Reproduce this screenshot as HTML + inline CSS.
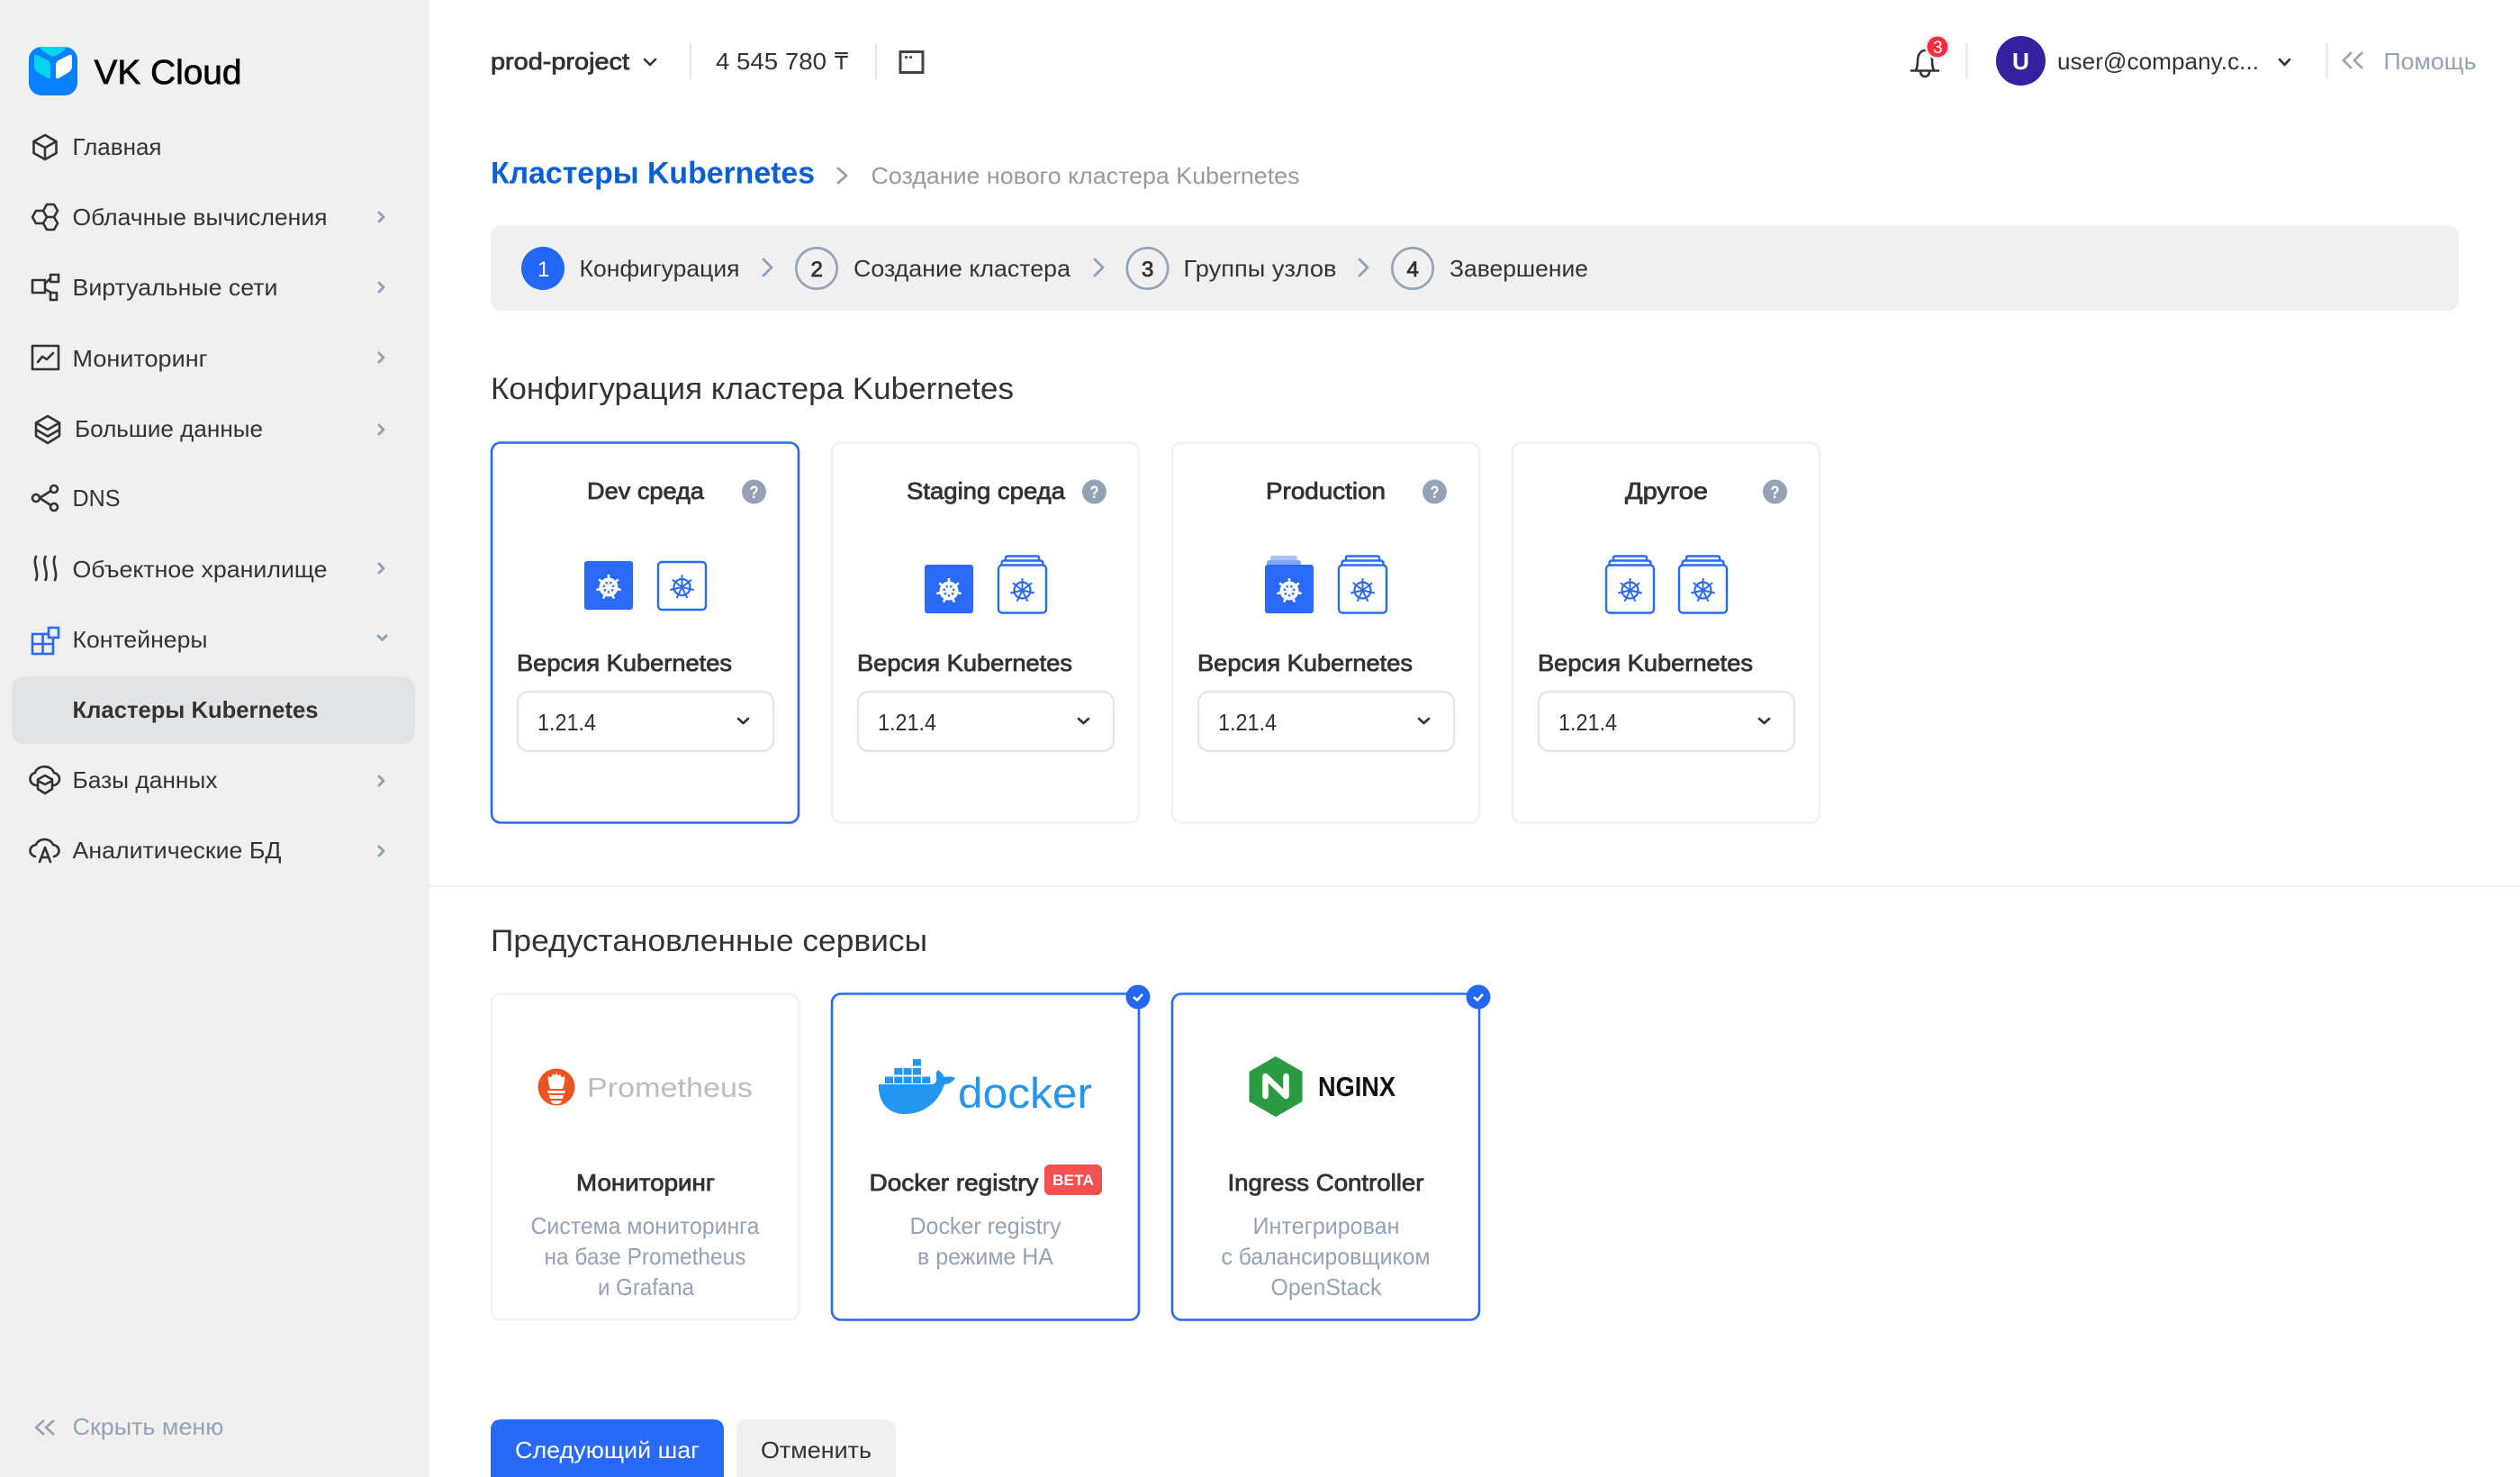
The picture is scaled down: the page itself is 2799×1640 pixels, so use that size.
<!DOCTYPE html>
<html lang="ru"><head><meta charset="utf-8"><title>VK Cloud</title>
<style>
html,body{margin:0;padding:0;width:2799px;height:1640px;overflow:hidden;background:#fff}
svg{display:block}
text{font-family:"Liberation Sans","DejaVu Sans",sans-serif;font-size:26px;fill:#333;}
.m{stroke:#333;stroke-width:.8px}
.b{font-weight:700}
.g{fill:#94a2b5}
.i{fill:none;stroke:#333;stroke-width:2.6;stroke-linejoin:round;stroke-linecap:round}
.c{fill:none;stroke:#8f9fb5;stroke-width:2.8;stroke-linecap:round;stroke-linejoin:round}
.d{fill:none;stroke:#333;stroke-width:2.6;stroke-linecap:round;stroke-linejoin:round}
</style></head><body>
<svg width="2799" height="1640" viewBox="0 0 2799 1640" xmlns="http://www.w3.org/2000/svg">
<defs>
<g id="helm">
<circle r="9" fill="none" stroke="currentColor" stroke-width="2.2"/>
<path d="M0 0L0-13.5M0 0L10.6-8.4M0 0L13.2 3M0 0L5.9 12.2M0 0L-5.9 12.2M0 0L-13.2 3M0 0L-10.6-8.4" fill="none" stroke="currentColor" stroke-width="2"/>
</g>
<g id="helmw">
<circle r="8.5" fill="none" stroke="#fff" stroke-width="4"/>
<circle r="3" fill="#fff"/>
<path d="M0 0L0-14M0 0L10.8-8.6M0 0L13.6 3M0 0L6 12.6M0 0L-6 12.6M0 0L-13.6 3M0 0L-10.8-8.6" fill="none" stroke="#fff" stroke-width="2.6"/>
</g>
<g id="srv" fill="none" stroke="#2a6af6" stroke-width="2.4" stroke-linejoin="round">
<rect x="0" y="0" width="53" height="53" rx="4" fill="#fff"/>
<path d="M3.5 0V-2Q3.5-5 7-5H46Q49.5-5 49.5-2V0"/>
<path d="M8-5V-8Q8-10 10-10H43Q45-10 45-8V-5"/>
</g>
<g id="sel">
<rect x="0" y="0" width="284" height="66" rx="12" fill="#fff" stroke="#e4e5e9" stroke-width="2.4"/>
<text x="22" y="43" textLength="65" lengthAdjust="spacingAndGlyphs">1.21.4</text>
<path d="M245 30L250.500 35L256 30" class="d"/>
</g>
<g id="q">
<circle r="13.5" fill="#94a2b5"/>
<text x="-5" y="7" style="font-size:19px;fill:#fff" class="b" textLength="10" lengthAdjust="spacingAndGlyphs">?</text>
</g>
</defs>

<!-- sidebar -->
<rect x="0" y="0" width="477" height="1640" fill="#f0f0f1"/>
<rect x="32" y="52" width="54" height="54" rx="14" fill="#0b80ff"/>
<path d="M44 52H74C72 56 66 60 59 63C52 60 46 56 44 52Z" fill="#02d6ef"/>
<path d="M38 63Q38 60 41 61L53 67Q56 69 56 72V85Q56 88 53 87L43 81Q38 78 38 74Z" fill="#02d6ef"/>
<path d="M80 63Q80 60 77 61L65 67Q62 69 62 72V85Q62 88 65 87L75 81Q80 78 80 74Z" fill="#fff"/>
<text x="104.500" y="93" style="font-size:38px;fill:#000;stroke:#000;stroke-width:.7px" textLength="164" lengthAdjust="spacingAndGlyphs">VK Cloud</text>

<path class="i" d="M50 150L62.5 157V170L50 177L37.5 170V157ZM37.5 157L50 164L62.5 157M50 164V177"/>
<text x="80.500" y="172" textLength="99" lengthAdjust="spacingAndGlyphs">Главная</text>

<path class="i" d="M36 241L40 234H48L52 241L48 248H40ZM48 234L52 227H60L64 234L60 241H52ZM48 248L52 241H60L64 248L60 255H52Z"/>
<text x="80.500" y="250" textLength="283" lengthAdjust="spacingAndGlyphs">Облачные вычисления</text>
<path class="c" d="M421 236L426 241L421 246"/>

<path class="i" d="M36 311H50V325H36ZM56 305H65V313H56ZM56 325H63V333H56ZM50 315L56 309M50 321L57 325" stroke-linecap="butt"/>
<text x="80.500" y="328" textLength="228" lengthAdjust="spacingAndGlyphs">Виртуальные сети</text>
<path class="c" d="M421 314L426 319L421 324"/>

<path class="i" d="M36 384H65V410H36ZM42 402L47 396L52 399L59 392"/>
<text x="80.500" y="407" textLength="150" lengthAdjust="spacingAndGlyphs">Мониторинг</text>
<path class="c" d="M421 392L426 397L421 402"/>

<path class="i" d="M53 462L66 469.5L53 477L40 469.5ZM40 469.5V484L53 492L66 484V469.5M40 477L53 484.5L66 477"/>
<text x="83" y="485" textLength="209" lengthAdjust="spacingAndGlyphs">Большие данные</text>
<path class="c" d="M421 472L426 477L421 482"/>

<g class="i"><circle cx="40" cy="553" r="4"/><circle cx="60" cy="543" r="4"/><circle cx="60" cy="563" r="4"/><path d="M44 553L56.5 545M44 553L56.5 561"/></g>
<text x="80.500" y="562" textLength="53" lengthAdjust="spacingAndGlyphs">DNS</text>

<path class="i" d="M40 618C36 626 44 636 40 644M50.5 618C46.5 626 54.5 636 50.5 644M61 618C57 626 65 636 61 644"/>
<text x="80.500" y="641" textLength="283" lengthAdjust="spacingAndGlyphs">Объектное хранилище</text>
<path class="c" d="M421 626L426 631L421 636"/>

<g fill="none" stroke="#2a6af6" stroke-width="2.6"><rect x="36" y="704" width="23" height="22"/><path d="M36 715H59M47.5 704V726"/><rect x="54" y="697" width="11" height="11" fill="#f0f0f1"/></g>
<text x="80.500" y="719" textLength="150" lengthAdjust="spacingAndGlyphs">Контейнеры</text>
<path class="c" d="M420 706L424.5 710.500L429 706"/>

<rect x="13" y="751" width="448" height="75" rx="14" fill="#e2e3e5"/>
<text x="80.500" y="797" class="b" textLength="273" lengthAdjust="spacingAndGlyphs">Кластеры Kubernetes</text>

<path class="i" d="M40 872C32 871 31 860 39 858C41 850 56 848 60 858C68 860 68 870 60 872M50 861L58 865.5V876L50 881L42 876V865.5ZM42 867L50 871L58 867"/>
<text x="80.500" y="875" textLength="161" lengthAdjust="spacingAndGlyphs">Базы данных</text>
<path class="c" d="M421 862L426 867L421 872"/>

<path class="i" d="M39 951C31 949 32 939 40 938C43 930 56 930 59 938C67 939 68 949 60 951M44 957L50 941L56 957M46 952H54"/>
<text x="80.500" y="953" textLength="232" lengthAdjust="spacingAndGlyphs">Аналитические БД</text>
<path class="c" d="M421 940L426 945L421 950"/>

<path d="M49 1577L40 1585L49 1593M60 1577L51 1585L60 1593" fill="none" stroke="#94a2b5" stroke-width="2.6"/>
<text x="80.500" y="1593" class="g" textLength="168" lengthAdjust="spacingAndGlyphs">Скрыть меню</text>

<!-- header -->
<text x="545" y="77" class="m" textLength="154" lengthAdjust="spacingAndGlyphs">prod-project</text>
<path class="d" d="M716 66L722 72L728 66"/>
<path d="M767 48V88M973 48V88M2184.5 48V88M2584.5 48V88" stroke="#e4e7ef" stroke-width="2.2"/>
<text x="795" y="77" textLength="123" lengthAdjust="spacingAndGlyphs">4 545 780</text>
<text x="927" y="77" textLength="15" lengthAdjust="spacingAndGlyphs">₸</text>
<rect x="1000" y="57.500" width="25" height="23" fill="none" stroke="#444" stroke-width="3"/>
<path d="M1005 63.5H1008M1010 63.5H1013" stroke="#444" stroke-width="2.5"/>

<path class="i" d="M2128 78C2130 74 2130 70 2130 67C2130 60 2134 56 2138 56C2142 56 2146 60 2146 67C2146 70 2146 74 2148 78M2123 78.5H2153M2133 79C2133 87 2143 87 2143 79"/>
<circle cx="2152" cy="52" r="14" fill="#eee"/>
<circle cx="2152" cy="52" r="11.5" fill="#ff2d3d"/>
<text x="2147" y="59" style="font-size:19px;fill:#fff">3</text>
<circle cx="2244.5" cy="67.5" r="27.5" fill="#3421a0"/>
<text x="2235" y="77" class="b" style="fill:#fff" textLength="19" lengthAdjust="spacingAndGlyphs">U</text>
<text x="2285" y="77" textLength="224" lengthAdjust="spacingAndGlyphs">user@company.c...</text>
<path class="d" d="M2532 66L2537.500 72L2543 66"/>
<path d="M2612 58L2603 67L2612 76M2624 58L2615 67L2624 76" fill="none" stroke="#94a2b5" stroke-width="2.6"/>
<text x="2647.500" y="77" class="g" textLength="103" lengthAdjust="spacingAndGlyphs">Помощь</text>

<!-- breadcrumb -->
<text x="545" y="203.500" class="b" style="font-size:34px;fill:#0a5fd6" textLength="360" lengthAdjust="spacingAndGlyphs">Кластеры Kubernetes</text>
<path class="c" d="M931 187L940 195L931 203" stroke-width="3"/>
<text x="967.500" y="204" style="fill:#999" textLength="476" lengthAdjust="spacingAndGlyphs">Создание нового кластера Kubernetes</text>

<!-- stepper -->
<rect x="545" y="250" width="2186" height="95" rx="12" fill="#f0f0f0"/>
<circle cx="603" cy="298" r="24" fill="#2466f5"/>
<text x="597" y="307" style="font-size:24px;fill:#fff">1</text>
<text x="643.500" y="307" textLength="178" lengthAdjust="spacingAndGlyphs">Конфигурация</text>
<path class="c" d="M848 288L857 297L848 306"/>
<circle cx="907" cy="298" r="22.7" fill="none" stroke="#94a2b5" stroke-width="2.6"/>
<text x="900.5" y="307" class="m" style="font-size:24px">2</text>
<text x="948" y="307" textLength="241" lengthAdjust="spacingAndGlyphs">Создание кластера</text>
<path class="c" d="M1216 288L1225 297L1216 306"/>
<circle cx="1274.500" cy="298" r="22.7" fill="none" stroke="#94a2b5" stroke-width="2.6"/>
<text x="1268" y="307" class="m" style="font-size:24px">3</text>
<text x="1314.500" y="307" textLength="170" lengthAdjust="spacingAndGlyphs">Группы узлов</text>
<path class="c" d="M1510 288L1519 297L1510 306"/>
<circle cx="1569" cy="298" r="22.7" fill="none" stroke="#94a2b5" stroke-width="2.6"/>
<text x="1562.5" y="307" class="m" style="font-size:24px">4</text>
<text x="1610" y="307" textLength="154" lengthAdjust="spacingAndGlyphs">Завершение</text>

<!-- config section -->
<text x="545" y="443" style="font-size:34px" textLength="581" lengthAdjust="spacingAndGlyphs">Конфигурация кластера Kubernetes</text>

<rect x="546" y="491.5" width="341" height="422" rx="10" fill="#fff" stroke="#2a6af6" stroke-width="2.6"/>
<rect x="924" y="491.5" width="341" height="422" rx="10" fill="#fff" stroke="#f1f1f2" stroke-width="2.6"/>
<rect x="1302" y="491.5" width="341" height="422" rx="10" fill="#fff" stroke="#f1f1f2" stroke-width="2.6"/>
<rect x="1680" y="491.5" width="341" height="422" rx="10" fill="#fff" stroke="#f1f1f2" stroke-width="2.6"/>

<text x="652" y="554" class="m" textLength="130" lengthAdjust="spacingAndGlyphs">Dev среда</text>
<text x="1007" y="554" class="m" textLength="176" lengthAdjust="spacingAndGlyphs">Staging среда</text>
<text x="1406" y="554" class="m" textLength="133" lengthAdjust="spacingAndGlyphs">Production</text>
<text x="1805" y="554" class="m" textLength="92" lengthAdjust="spacingAndGlyphs">Другое</text>
<use href="#q" x="837.5" y="546"/>
<use href="#q" x="1215.5" y="546"/>
<use href="#q" x="1593.5" y="546"/>
<use href="#q" x="1971.5" y="546"/>

<!-- node icons card 1 -->
<rect x="649" y="623" width="54" height="54" rx="3" fill="#2a6af6"/>
<use href="#helmw" x="676" y="652"/>
<rect x="731" y="624" width="53" height="53" rx="4" fill="#fff" stroke="#2a6af6" stroke-width="2.4"/>
<use href="#helm" x="757.500" y="652" style="color:#2a6af6"/>
<!-- card 2 -->
<rect x="1027" y="627" width="54" height="54" rx="3" fill="#2a6af6"/>
<use href="#helmw" x="1054" y="656"/>
<use href="#srv" x="1109" y="627.500"/>
<use href="#helm" x="1135.500" y="655.500" style="color:#2a6af6"/>
<!-- card 3 -->
<path d="M1411 622V620Q1411 617 1414 617H1438Q1441 617 1441 620V622Z" fill="#a9c4fb"/>
<path d="M1407 628V625Q1407 622 1410 622H1442Q1445 622 1445 625V628Z" fill="#7fa6f8"/>
<rect x="1405" y="627" width="54" height="54" rx="3" fill="#2a6af6"/>
<use href="#helmw" x="1432" y="656"/>
<use href="#srv" x="1487" y="627.500"/>
<use href="#helm" x="1513.500" y="655.500" style="color:#2a6af6"/>
<!-- card 4 -->
<use href="#srv" x="1784" y="627.500"/>
<use href="#helm" x="1810.500" y="655.500" style="color:#2a6af6"/>
<use href="#srv" x="1865" y="627.500"/>
<use href="#helm" x="1891.500" y="655.500" style="color:#2a6af6"/>

<text x="574" y="745" class="m" textLength="239" lengthAdjust="spacingAndGlyphs">Версия Kubernetes</text>
<text x="952" y="745" class="m" textLength="239" lengthAdjust="spacingAndGlyphs">Версия Kubernetes</text>
<text x="1330" y="745" class="m" textLength="239" lengthAdjust="spacingAndGlyphs">Версия Kubernetes</text>
<text x="1708" y="745" class="m" textLength="239" lengthAdjust="spacingAndGlyphs">Версия Kubernetes</text>
<use href="#sel" x="575" y="768"/>
<use href="#sel" x="953" y="768"/>
<use href="#sel" x="1331" y="768"/>
<use href="#sel" x="1709" y="768"/>

<rect x="477" y="983" width="2322" height="2" fill="#f0f0f1"/>

<!-- services -->
<text x="545" y="1056" style="font-size:34px" textLength="485" lengthAdjust="spacingAndGlyphs">Предустановленные сервисы</text>

<rect x="546" y="1103.5" width="341" height="362" rx="10" fill="#fff" stroke="#f1f1f2" stroke-width="2.6"/>
<rect x="924" y="1103.5" width="341" height="362" rx="10" fill="#fff" stroke="#2a6af6" stroke-width="2.6"/>
<rect x="1302" y="1103.5" width="341" height="362" rx="10" fill="#fff" stroke="#2a6af6" stroke-width="2.6"/>

<circle cx="1264" cy="1107" r="13.500" fill="#2466f5"/>
<path d="M1259 1107L1263 1110.500L1269 1104" fill="none" stroke="#fff" stroke-width="2.600"/>
<circle cx="1642" cy="1107" r="13.500" fill="#2466f5"/>
<path d="M1637 1107L1641 1110.500L1647 1104" fill="none" stroke="#fff" stroke-width="2.600"/>

<!-- prometheus -->
<circle cx="618" cy="1207" r="20.5" fill="#ea5322"/>
<path d="M618 1189C618 1194 621 1196 622 1192C623 1196 625 1198 627 1194C628 1200 626 1205 625 1209H611C610 1205 608 1200 609 1194C611 1198 613 1196 614 1192C615 1195 618 1194 618 1189Z" fill="#fff"/>
<path d="M608 1211H628L627 1214H609ZM610 1216H626L625 1220H611Z" fill="#fff"/>
<path d="M612 1222H624C624 1225 621 1226 618 1226C615 1226 612 1225 612 1222Z" fill="#fff"/>
<text x="652" y="1218" style="font-size:31px;fill:#bdbdbd" textLength="184" lengthAdjust="spacingAndGlyphs">Prometheus</text>

<text x="640" y="1322" class="m" textLength="154" lengthAdjust="spacingAndGlyphs">Мониторинг</text>
<text x="589.500" y="1370" class="g" textLength="254" lengthAdjust="spacingAndGlyphs">Система мониторинга</text>
<text x="604.500" y="1404" class="g" textLength="224" lengthAdjust="spacingAndGlyphs">на базе Prometheus</text>
<text x="664" y="1438" class="g" textLength="107" lengthAdjust="spacingAndGlyphs">и Grafana</text>

<!-- docker -->
<g fill="#2496ed">
<path d="M976 1204H1033C1038 1204 1041 1202 1040 1196C1039.500 1193 1040 1190 1041.500 1188C1045 1190 1048 1193 1048.500 1196C1053 1195 1058 1195 1061 1197C1058 1202 1053 1204 1049 1204C1043 1222 1028 1237 1005 1237C985 1237 975 1222 976 1204Z"/>
<rect x="983" y="1195.500" width="9" height="7.500"/><rect x="993.300" y="1195.500" width="9" height="7.500"/><rect x="1003.600" y="1195.500" width="9" height="7.500"/><rect x="1013.900" y="1195.500" width="9" height="7.500"/><rect x="1024.200" y="1195.500" width="9" height="7.500"/>
<rect x="993.300" y="1186" width="9" height="7.500"/><rect x="1003.600" y="1186" width="9" height="7.500"/><rect x="1013.900" y="1186" width="9" height="7.500"/>
<rect x="1013.900" y="1176" width="9" height="7.500"/>
</g>
<text x="1064" y="1230" style="font-size:47px;fill:#2496ed" textLength="149" lengthAdjust="spacingAndGlyphs">docker</text>

<text x="965.500" y="1322" class="m" textLength="188" lengthAdjust="spacingAndGlyphs">Docker registry</text>
<rect x="1160" y="1293" width="64" height="34" rx="6" fill="#f55050"/>
<text x="1169" y="1316" class="b" style="font-size:17px;fill:#fff" textLength="46" lengthAdjust="spacingAndGlyphs">BETA</text>
<text x="1010.500" y="1370" class="g" textLength="168" lengthAdjust="spacingAndGlyphs">Docker registry</text>
<text x="1019" y="1404" class="g" textLength="151" lengthAdjust="spacingAndGlyphs">в режиме HA</text>

<!-- nginx -->
<path d="M1417 1174L1445.500 1190.500V1222.500L1417 1239L1388.500 1222.500V1190.500Z" fill="#2b9a42" stroke="#2b9a42" stroke-width="2" stroke-linejoin="round"/>
<path d="M1405.500 1217V1195L1428.500 1217V1195" fill="none" stroke="#fff" stroke-width="6.500" stroke-linecap="round" stroke-linejoin="round"/>
<text x="1464" y="1217" class="b" style="font-size:31px;fill:#111" textLength="86" lengthAdjust="spacingAndGlyphs">NGINX</text>

<text x="1363.500" y="1322" class="m" textLength="218" lengthAdjust="spacingAndGlyphs">Ingress Controller</text>
<text x="1391.500" y="1370" class="g" textLength="163" lengthAdjust="spacingAndGlyphs">Интегрирован</text>
<text x="1356.500" y="1404" class="g" textLength="232" lengthAdjust="spacingAndGlyphs">с балансировщиком</text>
<text x="1411.500" y="1438" class="g" textLength="123" lengthAdjust="spacingAndGlyphs">OpenStack</text>

<!-- buttons -->
<path d="M545 1640V1588Q545 1576 557 1576H792Q804 1576 804 1588V1640Z" fill="#2869f6"/>
<text x="572" y="1619" style="fill:#fff" textLength="205" lengthAdjust="spacingAndGlyphs">Следующий шаг</text>
<path d="M818 1640V1588Q818 1576 830 1576H983Q995 1576 995 1588V1640Z" fill="#f0f0f0"/>
<text x="845" y="1619" textLength="123" lengthAdjust="spacingAndGlyphs">Отменить</text>
</svg>
</body></html>
